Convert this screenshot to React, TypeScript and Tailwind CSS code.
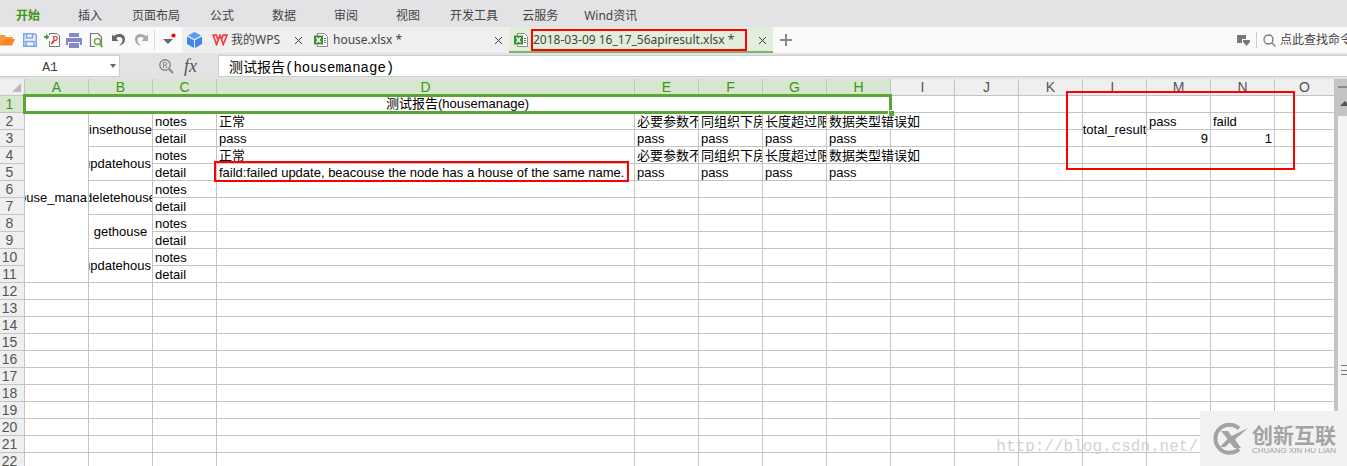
import React from 'react';

const COLS = ['A','B','C','D','E','F','G','H','I','J','K','L','M','N','O'];
const ROWS = Array.from({ length: 22 }, (_, i) => i + 1);
const MENU = [
  { label: '插入', gap: 'ml-[38px]' },
  { label: '页面布局', gap: 'ml-[30px]' },
  { label: '公式', gap: 'ml-[30px]' },
  { label: '数据', gap: 'ml-[38px]' },
  { label: '审阅', gap: 'ml-[38px]' },
  { label: '视图', gap: 'ml-[38px]' },
  { label: '开发工具', gap: 'ml-[30px]' },
  { label: '云服务', gap: 'ml-[24px]' },
  { label: 'Wind资讯', gap: 'ml-[26px]' },
];

type Cell = { text: string; span?: number; align?: string; spill?: boolean; colSpan?: number };

const CASES = ['insethouse', 'updatehous', 'deletehouse', 'gethouse', 'updatehous'];
const NOTES = ['正常', '必要参数不能', '同组织下房间', '长度超过限制', '数据类型错误如'];

const cells: Record<string, Cell> = {
  A1: { text: '测试报告(housemanage)', colSpan: 8, align: 'justify-center' },
  A2: { text: 'house_mana', span: 10, align: 'justify-end pr-px' },
  L2: { text: 'total_result', span: 2, align: 'justify-center' },
  M2: { text: 'pass' },
  N2: { text: 'faild' },
  M3: { text: '9', align: 'justify-end pr-[2px] pt-px' },
  N3: { text: '1', align: 'justify-end pr-[2px] pt-px' },
};
CASES.forEach((name, i) => {
  const r = 2 + i * 2;
  cells['B' + r] = { text: name, span: 2, align: name === 'updatehous' ? 'justify-end pr-px' : 'justify-center' };
  cells['C' + r] = { text: 'notes' };
  cells['C' + (r + 1)] = { text: 'detail' };
  if (i < 2) {
    NOTES.forEach((note, n) => {
      cells['DEFGH'[n] + r] = { text: note, spill: n === 4 };
      cells['DEFGH'[n] + (r + 1)] = { text: 'pass' };
    });
  }
});
cells.D5 = { text: 'faild:failed update, beacouse the node has a house of the same name.' };

const covered = new Set<string>();
Object.entries(cells).forEach(([key, c]) => {
  const col = key[0];
  const row = Number(key.slice(1));
  for (let k = 1; k < (c.span ?? 1); k++) covered.add(col + (row + k));
  for (let k = 1; k < (c.colSpan ?? 1); k++) covered.add(COLS[COLS.indexOf(col) + k] + row);
});

const ANCHORS = ['A1', 'L1', 'D5'];

function Close() {
  return (
    <svg width="9" height="9" viewBox="0 0 9 9" stroke="#444" fill="none"><path d="M1 1l7 7M8 1L1 8" /></svg>
  );
}

function XlsIcon() {
  return (
    <svg className="shrink-0" width="14" height="15" viewBox="0 0 14 15" fill="none">
      <path d="M3.500 3V.5h7l3 3v10h-10V12" fill="#fff" stroke="#8a8a8a" />
      <path d="M10 5.500h2M10 7.500h2M10 9.500h2" stroke="#777" />
      <rect x="0" y="2.500" width="9" height="9" fill="#3f8f3a" />
      <path d="M2.500 4.500l4 5M6.500 4.500l-4 5" stroke="#fff" strokeWidth="1.400" />
    </svg>
  );
}

export default function App() {
  return (
    <div className="relative flex h-screen flex-col overflow-hidden bg-[#e3e3e5] font-['Noto_Sans','Noto_Sans_CJK_SC',sans-serif] text-xs text-[#444]">
      <nav className="flex h-[27px] shrink-0 items-center whitespace-nowrap pl-4 pt-1">
        <button className="font-bold text-[#3f9417]">开始</button>
        {MENU.map((m) => (
          <button key={m.label} className={m.gap}>{m.label}</button>
        ))}
      </nav>

      <div className="flex h-[26px] shrink-0 items-stretch whitespace-nowrap bg-[#fafafa]">
        <div className="flex w-[182px] shrink-0 items-center">
          <button aria-label="打开">
            <svg width="16" height="16" viewBox="0 0 16 16"><path d="M0 13V3h5l1 2h7v2H4L1 13z" fill="#f59a35" /><path d="M4 7h11l-3 6.500H0z" fill="#f7862b" /></svg>
          </button>
          <button aria-label="保存" className="ml-[7px]">
            <svg width="14" height="14" viewBox="0 0 14 14" fill="none" stroke="#7da2ea" strokeWidth="1.500"><path d="M.75.75h11l1.500 1.500v11H.75z" fill="#eef4fd" /><path d="M3.500 1v4h6V1M3 13V8.500h8V13" /></svg>
          </button>
          <button aria-label="输出为PDF" className="ml-[7px]">
            <svg width="17" height="16" viewBox="0 0 17 16" fill="none"><path d="M5.500 3V1.500H13L15.500 4v10.500h-10V9" stroke="#777" /><path d="M0 5h3" stroke="#4e9a3b" strokeWidth="2" /><path d="M2 2l3.500 3L2 8z" fill="#4e9a3b" /><path d="M7.500 12c2.500-1 3-5 2-7.500 3.500-1 5 1.500 3 3.500-2 1.500-4-.5-5 4" stroke="#d2413b" strokeWidth="1.200" /></svg>
          </button>
          <button aria-label="打印" className="ml-[5px]">
            <svg width="16" height="15" viewBox="0 0 16 15" fill="#8589c9"><path d="M3 0h10v4H3zM0 5h16v7h-2V9H2v3H0zM3 10h10v5H3z" /></svg>
          </button>
          <button aria-label="打印预览" className="ml-[7px]">
            <svg width="15" height="16" viewBox="0 0 15 16" fill="none"><path d="M8 14.500H1.500v-13h7.500l3.500 3.500v9.500" stroke="#777" strokeWidth="1.200" /><path d="M6 14.500h6" stroke="#fafafa" strokeWidth="2" /><circle cx="8.500" cy="9.500" r="3" stroke="#6dac55" strokeWidth="1.400" /><path d="M10.500 12l3 3" stroke="#6dac55" strokeWidth="2" /></svg>
          </button>
          <button aria-label="撤销" className="ml-2">
            <svg width="14" height="14" viewBox="0 0 14 14" fill="#666"><path d="M0 1.500l1.800 1.800C5.500-.5 13 .5 13 6c0 4-3 6-6 7 2-2 3.500-3.500 3.500-6C10.500 4 6.500 3 4.200 5.500L6.500 8H0z" /></svg>
          </button>
          <button aria-label="恢复" className="ml-2">
            <svg width="14" height="14" viewBox="0 0 14 14" fill="#aaa"><path d="M14 1.500l-1.800 1.800C8.500-.5 1 .5 1 6c0 4 3 6 6 7-2-2-3.500-3.500-3.500-6C3.500 4 7.500 3 9.800 5.500L7.500 8H14z" /></svg>
          </button>
          <span className="ml-[6px] h-5 w-px bg-[#ddd]" />
          <button aria-label="更多" className="ml-2">
            <svg width="13" height="14" viewBox="0 0 13 14"><path d="M0 6h10l-5 5z" fill="#666" /><circle cx="10.500" cy="2.500" r="2.100" fill="#f00" /></svg>
          </button>
        </div>
        <div className="flex w-[327px] shrink-0 items-center bg-[#efefef] pl-[5px]">
          <svg width="15" height="16" viewBox="0 0 15 16" fill="#3f86f0"><path d="M7.500 0L14 3.500 7.500 7 1 3.500z" fill="#5a9bf5" /><path d="M0 4.500L7 8.200V16l-7-4z" /><path d="M15 4.500L8 8.200V16l7-4z" /></svg>
          <svg className="ml-[10px]" width="16" height="12" viewBox="0 0 16 12" fill="none" stroke="#f0413f" strokeWidth="1.700"><path d="M6.500 7L4.300 1.200H1.200l3.300 9.300L8 1.200l3.200 9.300L15 1.200h-4L9.500 5.500" /></svg>
          <button className="ml-[3px]">我的WPS</button>
          <button aria-label="关闭 我的WPS" className="ml-[14px]"><Close /></button>
          <span className="ml-[11px]"><XlsIcon /></span>
          <button className="ml-[5px]">house.xlsx *</button>
          <button aria-label="关闭 house.xlsx" className="ml-auto mr-[6px]"><Close /></button>
        </div>
        <div className="flex w-[264px] shrink-0 items-center bg-[#e2eedb] pl-[5px] shadow-[inset_0_-2px_0_#7fb565]">
          <XlsIcon />
          <button className="ml-[3px] flex h-[22px] w-[216px] items-center border-2 border-[#f00]">2018-03-09 16_17_56apiresult.xlsx *</button>
          <button aria-label="关闭 apiresult.xlsx" className="ml-auto mr-[6px]"><Close /></button>
        </div>
        <button aria-label="新建" className="ml-[7px]">
          <svg width="12" height="12" viewBox="0 0 12 12" stroke="#888" strokeWidth="2"><path d="M6 0v12M0 6h12" /></svg>
        </button>
        <div className="ml-auto flex w-[110px] shrink-0 items-center overflow-hidden">
          <svg className="shrink-0" width="13" height="11" viewBox="0 0 13 11" fill="#777"><path d="M0 0h9v4H5v4H0zM6 5h7v2l-3.500 4L6 7z" /></svg>
          <span className="ml-[6px] h-4 w-px shrink-0 bg-[#ccc]" />
          <svg className="ml-[6px] shrink-0" width="13" height="13" viewBox="0 0 13 13" fill="none" stroke="#777" strokeWidth="1.300"><circle cx="5.500" cy="5.500" r="4.500" /><path d="M9 9l3.500 3.500" /></svg>
          <button className="ml-1 shrink-0">点此查找命令</button>
        </div>
      </div>

      <div className="flex h-[26px] shrink-0 items-center font-['Liberation_Mono','Noto_Sans_CJK_SC',monospace] text-[13px] text-black">
        <div className="flex h-[22px] w-[120px] shrink-0 items-center border border-l-0 border-[#cdcdd0] bg-white">
          <input aria-label="名称框" defaultValue="A1" className="w-[100px] pt-1 text-center text-[#444] outline-none" />
          <svg className="ml-[10px]" width="6" height="4" viewBox="0 0 6 4"><path d="M0 0h6L3 4z" fill="#666" /></svg>
        </div>
        <svg className="ml-[39px] shrink-0" width="15" height="15" viewBox="0 0 15 15" fill="none" stroke="#888"><circle cx="6" cy="6" r="5.200" strokeWidth="1.400" /><path d="M4.500 9V3.500h2a1.300 1.300 0 010 2.600h-2M6.500 6l1.500 3" /><path d="M10 10l4 4" strokeWidth="2.200" /></svg>
        <span className="ml-[10px] w-[34px] shrink-0 font-['Liberation_Serif',serif] text-lg italic text-[#555]">fx</span>
        <input aria-label="编辑栏" defaultValue="测试报告(housemanage)" className="h-[22px] min-w-0 flex-1 border border-r-0 border-[#cdcdd0] bg-white pl-[10px] text-sm outline-none" />
      </div>

      <div className="flex min-h-0 flex-1 overflow-hidden bg-white font-['Liberation_Sans','Noto_Sans_CJK_SC',sans-serif] text-[13px] leading-4 text-black">
        <div className="min-w-0 flex-1">
          <table className="w-full table-fixed border-separate border-spacing-0">
            <colgroup>
              <col className="w-[25px]" />
              {COLS.map((c) => <col key={c} className={c === 'D' ? 'w-[418px]' : c === 'O' ? '' : 'w-[64px]'} />)}
            </colgroup>
            <thead>
              <tr>
                <th className="h-[17px] border-b border-r border-[#c4c4c4] bg-[#efefef] p-0">
                  <svg className="ml-auto mr-[3px]" width="9" height="9" viewBox="0 0 8 8"><path d="M8 0v8H0z" fill="#bbb" /></svg>
                </th>
                {COLS.map((c, i) => (
                  <th key={c} className={`h-[17px] border-b border-r border-[#c4c4c4] p-0 text-sm leading-4 font-normal ${i < 8 ? 'bg-[#d7e6cf] text-[#3f9417]' : 'bg-[#efefef] text-[#555]'}`}>{c}</th>
                ))}
              </tr>
            </thead>
            <tbody>
              {ROWS.map((r) => (
                <tr key={r}>
                  <th className={`h-[17px] border-b border-r border-[#c4c4c4] p-0 pr-[5px] text-sm leading-4 font-normal ${r === 1 ? 'bg-[#d7e6cf] text-[#3f9417]' : 'bg-[#efefef] text-[#555]'}`}>{r}</th>
                  {COLS.map((col) => {
                    const key = col + r;
                    if (covered.has(key)) return null;
                    const c = cells[key];
                    return (
                      <td key={key} rowSpan={c?.span} colSpan={c?.colSpan} className={`h-[17px] border-b border-[#c4c4c4] p-0 ${c?.spill ? '' : 'border-r'} ${ANCHORS.includes(key) ? 'relative' : ''}`}>
                        {c && <div className={`flex h-4 whitespace-nowrap ${c.spill ? '' : 'overflow-hidden'} ${c.align ?? 'pl-[2px] pt-px'}`}><span>{c.text}</span></div>}
                        {key === 'A1' && (
                          <div className="absolute -top-[2px] -right-[2px] -bottom-[2px] -left-[2px] border-[3px] border-[#5ba533]">
                            <span className="absolute -right-[5px] -bottom-[5px] size-[6px] border-l border-t border-white bg-[#5ba533]" />
                          </div>
                        )}
                        {key === 'L1' && <div className="pointer-events-none absolute -top-[5px] -left-[17px] z-10 h-[79px] w-[229px] border-2 border-[#f00]" />}
                        {key === 'D5' && <div className="pointer-events-none absolute -top-[3px] -left-[3px] z-10 h-[21px] w-[415px] border-2 border-[#f00]" />}
                      </td>
                    );
                  })}
                </tr>
              ))}
            </tbody>
          </table>
        </div>
        <div className="flex w-3 shrink-0 flex-col overflow-hidden border-l-[3px] border-[#c4c4c4] bg-[#f3f3f3]">
          <div className="h-[37px] shrink-0 bg-[#c4c4c4] pt-[7px]">
            <div className="h-[2px] bg-[#8a8a8a]" />
            <svg className="ml-[2px] mt-[13px]" width="10" height="5" viewBox="0 0 10 5"><path d="M5 0l5 5H0z" fill="#555" /></svg>
          </div>
          <div className="mt-[249px] ml-[3px] flex h-[10px] shrink-0 flex-col justify-between">
            <span className="h-px bg-[#777]" />
            <span className="h-px bg-[#777]" />
            <span className="h-px bg-[#777]" />
          </div>
        </div>
      </div>

      <div className="pointer-events-none absolute right-0 bottom-0 flex items-end">
        <span className="pb-[9px] pr-[2px] font-['Liberation_Mono',monospace] text-base leading-5 text-[#d3d3cc]">http://blog.csdn.net/</span>
        <div className="flex h-[55px] w-[147px] items-center bg-[#f2f2f2] pl-3 text-[#a3a3a3]">
          <svg width="36" height="34" viewBox="0 0 36 34">
            <path d="M27 6.500A14 14 0 1 0 27 27" fill="none" stroke="#a3a3a3" strokeWidth="4" />
            <path d="M9 9h7l3.500 5L36 6 23 17.500 29 26h-7l-4-5.500L13 25H8l7.500-8z" fill="#a3a3a3" />
          </svg>
          <div className="ml-1 flex flex-col whitespace-nowrap">
            <span className="font-['Noto_Sans_CJK_SC',sans-serif] text-[21px] leading-6 font-bold">创新互联</span>
            <span className="font-['Liberation_Sans',sans-serif] text-[8px] leading-[10px]">CHUANG XIN HU LIAN</span>
          </div>
        </div>
      </div>
    </div>
  );
}
